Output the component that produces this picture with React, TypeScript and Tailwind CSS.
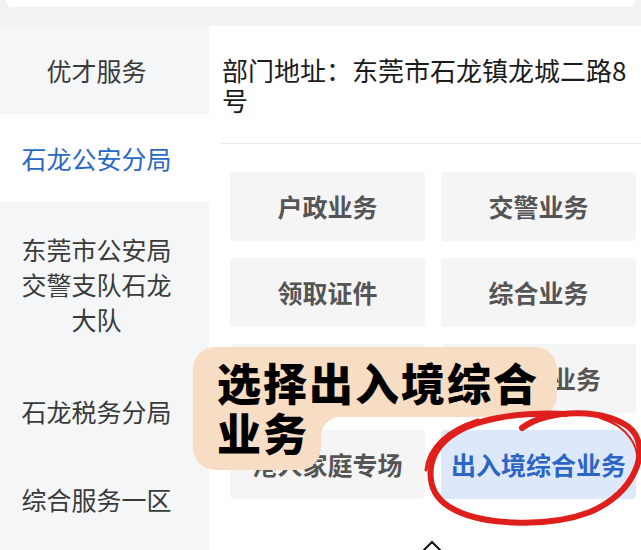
import React from 'react';

const FONT = '"Noto Sans CJK SC", "Noto Sans", sans-serif';

const sideItems = [
  { label: '优才服务', active: false },
  { label: '石龙公安分局', active: true },
  { label: '东莞市公安局交警支队石龙大队', active: false, multi: true },
  { label: '石龙税务分局', active: false },
  { label: '综合服务一区', active: false },
];

const services = [
  { label: '户政业务' },
  { label: '交警业务' },
  { label: '领取证件' },
  { label: '综合业务' },
  { label: '居住证业务' },
  { label: '港澳台业务' },
  { label: '港人家庭专场' },
  { label: '出入境综合业务', active: true },
];

function Sidebar() {
  return (
    <div className="w-[209px] shrink-0 bg-[#f5f6f8] flex flex-col">
      {sideItems.map((item) => (
        <div
          key={item.label}
          className={`pl-[18px] pr-[34px] text-center text-[25px] leading-[35px] ${
            item.multi ? 'py-[30px]' : 'py-[26px] leading-[36px]'
          } ${item.active ? 'bg-white text-[#2a68c6]' : 'text-[#3a3a3a]'}`}
        >
          {item.label}
        </div>
      ))}
    </div>
  );
}

function Content() {
  return (
    <div className="flex-1 bg-white">
      <div className="pl-[13px] pr-[5px] pt-[29px] pb-[28px] text-[26px] leading-[30px] text-[#1c1c1c]">
        部门地址：东莞市石龙镇龙城二路8号
      </div>
      <div className="ml-[11px] border-b border-[#ececec]" />
      <div className="ml-[21px] mr-[5px] mt-[28px] grid grid-cols-2 gap-x-[16px] gap-y-[17px]">
        {services.map((s) => (
          <div
            key={s.label}
            className={`h-[69px] rounded-[4px] flex items-center justify-center text-[25px] font-bold whitespace-nowrap ${
              s.active ? 'bg-[#dde8fa] text-[#2b65c6]' : 'bg-[#f5f5f5] text-[#555555]'
            }`}
          >
            {s.label}
          </div>
        ))}
      </div>
    </div>
  );
}

function Callout() {
  return (
    <div className="absolute left-[193px] top-[347px] text-black font-black text-[44px] tracking-[2px]">
      <div className="w-[364px] h-[70px] bg-[#f8ddc5] rounded-t-[22px] rounded-br-[22px] pl-[24px] pt-[10px] leading-[50px] whitespace-nowrap">
        选择出入境综合
      </div>
      <div className="relative w-[128px] h-[53px] bg-[#f8ddc5] rounded-b-[22px] pl-[24px] leading-[30px]">
        业务
        <div className="absolute left-[128px] top-0 w-[20px] h-[20px] bg-[radial-gradient(circle_at_100%_100%,transparent_20px,#f8ddc5_20.5px)]" />
      </div>
    </div>
  );
}

function Circle() {
  return (
    <svg className="absolute left-0 top-0 pointer-events-none" width="641" height="550" viewBox="0 0 641 550">
      <path
        d="M522 428 C548 408 610 408 632 430 C650 450 636 492 590 512 C548 528 478 526 448 506 C424 490 426 458 446 440 C470 418 520 412 566 414"
        fill="none"
        stroke="#df1f1b"
        strokeWidth="6"
        strokeLinecap="round"
      />
      <path
        d="M600 418 C628 426 642 448 636 470 C630 492 610 504 592 512"
        fill="none"
        stroke="#df1f1b"
        strokeWidth="2"
        strokeLinecap="round"
      />
      <path
        d="M426 470 C428 448 446 430 478 420"
        fill="none"
        stroke="#df1f1b"
        strokeWidth="3"
        strokeLinecap="round"
      />
    </svg>
  );
}

export default function App() {
  return (
    <div className="relative w-[641px] h-[550px] overflow-hidden bg-white" style={{ fontFamily: FONT }}>
      <div className="h-[26px] bg-[#f2f2f2] px-[6px]">
        <div className="h-[7px] bg-white rounded-b-[6px]" />
      </div>
      <div className="flex h-[524px]">
        <Sidebar />
        <Content />
      </div>
      <Callout />
      <Circle />
      <svg className="absolute left-[421px] top-[540px]" width="22" height="12" viewBox="0 0 22 12">
        <path d="M1 12 L11 2 L21 12" fill="none" stroke="#111" strokeWidth="2" />
      </svg>
    </div>
  );
}
